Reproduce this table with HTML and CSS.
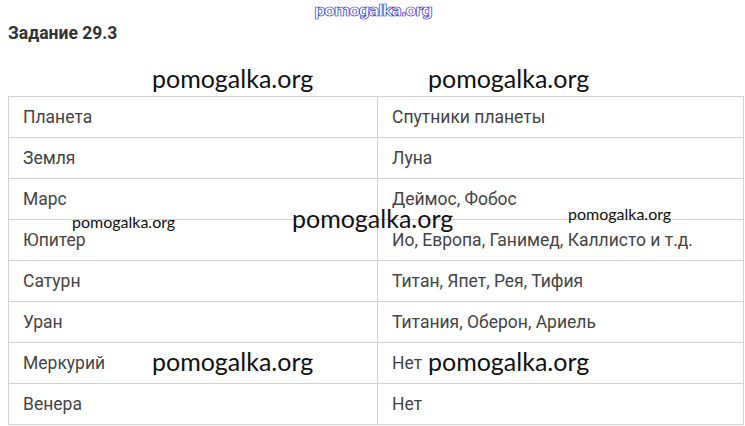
FILE: index.html
```html
<!DOCTYPE html>
<html lang="ru">
<head>
<meta charset="utf-8">
<title>Задание 29.3</title>
<link rel="stylesheet" href="styles.css">
</head>
<body>
<div class="page">
  <div class="wm-top">pomogalka.org</div>
  <h1 class="title">Задание 29.3</h1>
  <table class="grid">
    <tr><td>Планета</td><td>Спутники планеты</td></tr>
    <tr><td>Земля</td><td>Луна</td></tr>
    <tr><td>Марс</td><td>Деймос, Фобос</td></tr>
    <tr><td>Юпитер</td><td>Ио, Европа, Ганимед, Каллисто и т.д.</td></tr>
    <tr><td>Сатурн</td><td>Титан, Япет, Рея, Тифия</td></tr>
    <tr><td>Уран</td><td>Титания, Оберон, Ариель</td></tr>
    <tr><td>Меркурий</td><td>Нет</td></tr>
    <tr><td>Венера</td><td>Нет</td></tr>
  </table>
  <div class="wm big w1">pomogalka.org</div>
  <div class="wm big w2">pomogalka.org</div>
  <div class="wm small w3">pomogalka.org</div>
  <div class="wm big w4">pomogalka.org</div>
  <div class="wm small w5">pomogalka.org</div>
  <div class="wm big w6">pomogalka.org</div>
  <div class="wm big w7">pomogalka.org</div>
</div>
</body>
</html>
```

FILE: styles.css
```css
html, body {
  margin: 0;
  padding: 0;
  background: #ffffff;
}
.page {
  position: relative;
  width: 745px;
  height: 426px;
  padding: 0 0 0 8px;
  box-sizing: border-box;
  font-family: Roboto, "Liberation Sans", sans-serif;
  overflow: hidden;
}
.wm-top {
  position: absolute;
  left: 314px;
  top: 1px;
  font-family: "DejaVu Sans", sans-serif;
  font-weight: 700;
  font-size: 16px;
  letter-spacing: -1.4px;
  color: #ffffff;
  -webkit-text-stroke: 0.7px #3434c8;
}
.title {
  margin: 0;
  padding-top: 23px;
  height: 96px;
  box-sizing: border-box;
  font-size: 17.5px;
  font-weight: 700;
  color: #333333;
  line-height: 20px;
}
.grid {
  border-collapse: collapse;
  width: 736px;
  table-layout: fixed;
}
.grid td {
  border: 1px solid #d2d2d2;
  height: 41px;
  padding: 0 0 0 14px;
  font-size: 17.5px;
  color: #444444;
  box-sizing: border-box;
  vertical-align: middle;
}
.grid td:first-child {
  width: 369px;
}
.wm {
  position: absolute;
  font-family: Lato, "Open Sans", sans-serif;
  color: #111111;
  white-space: nowrap;
  line-height: 1;
}
.big {
  font-size: 25px;
}
.small {
  font-size: 16px;
}
.w1 { left: 152px; top: 66px; }
.w2 { left: 428px; top: 66px; }
.w3 { left: 72px; top: 214px; }
.w4 { left: 292px; top: 206px; }
.w5 { left: 568px; top: 206px; }
.w6 { left: 152px; top: 349px; }
.w7 { left: 428px; top: 349px; }
```
